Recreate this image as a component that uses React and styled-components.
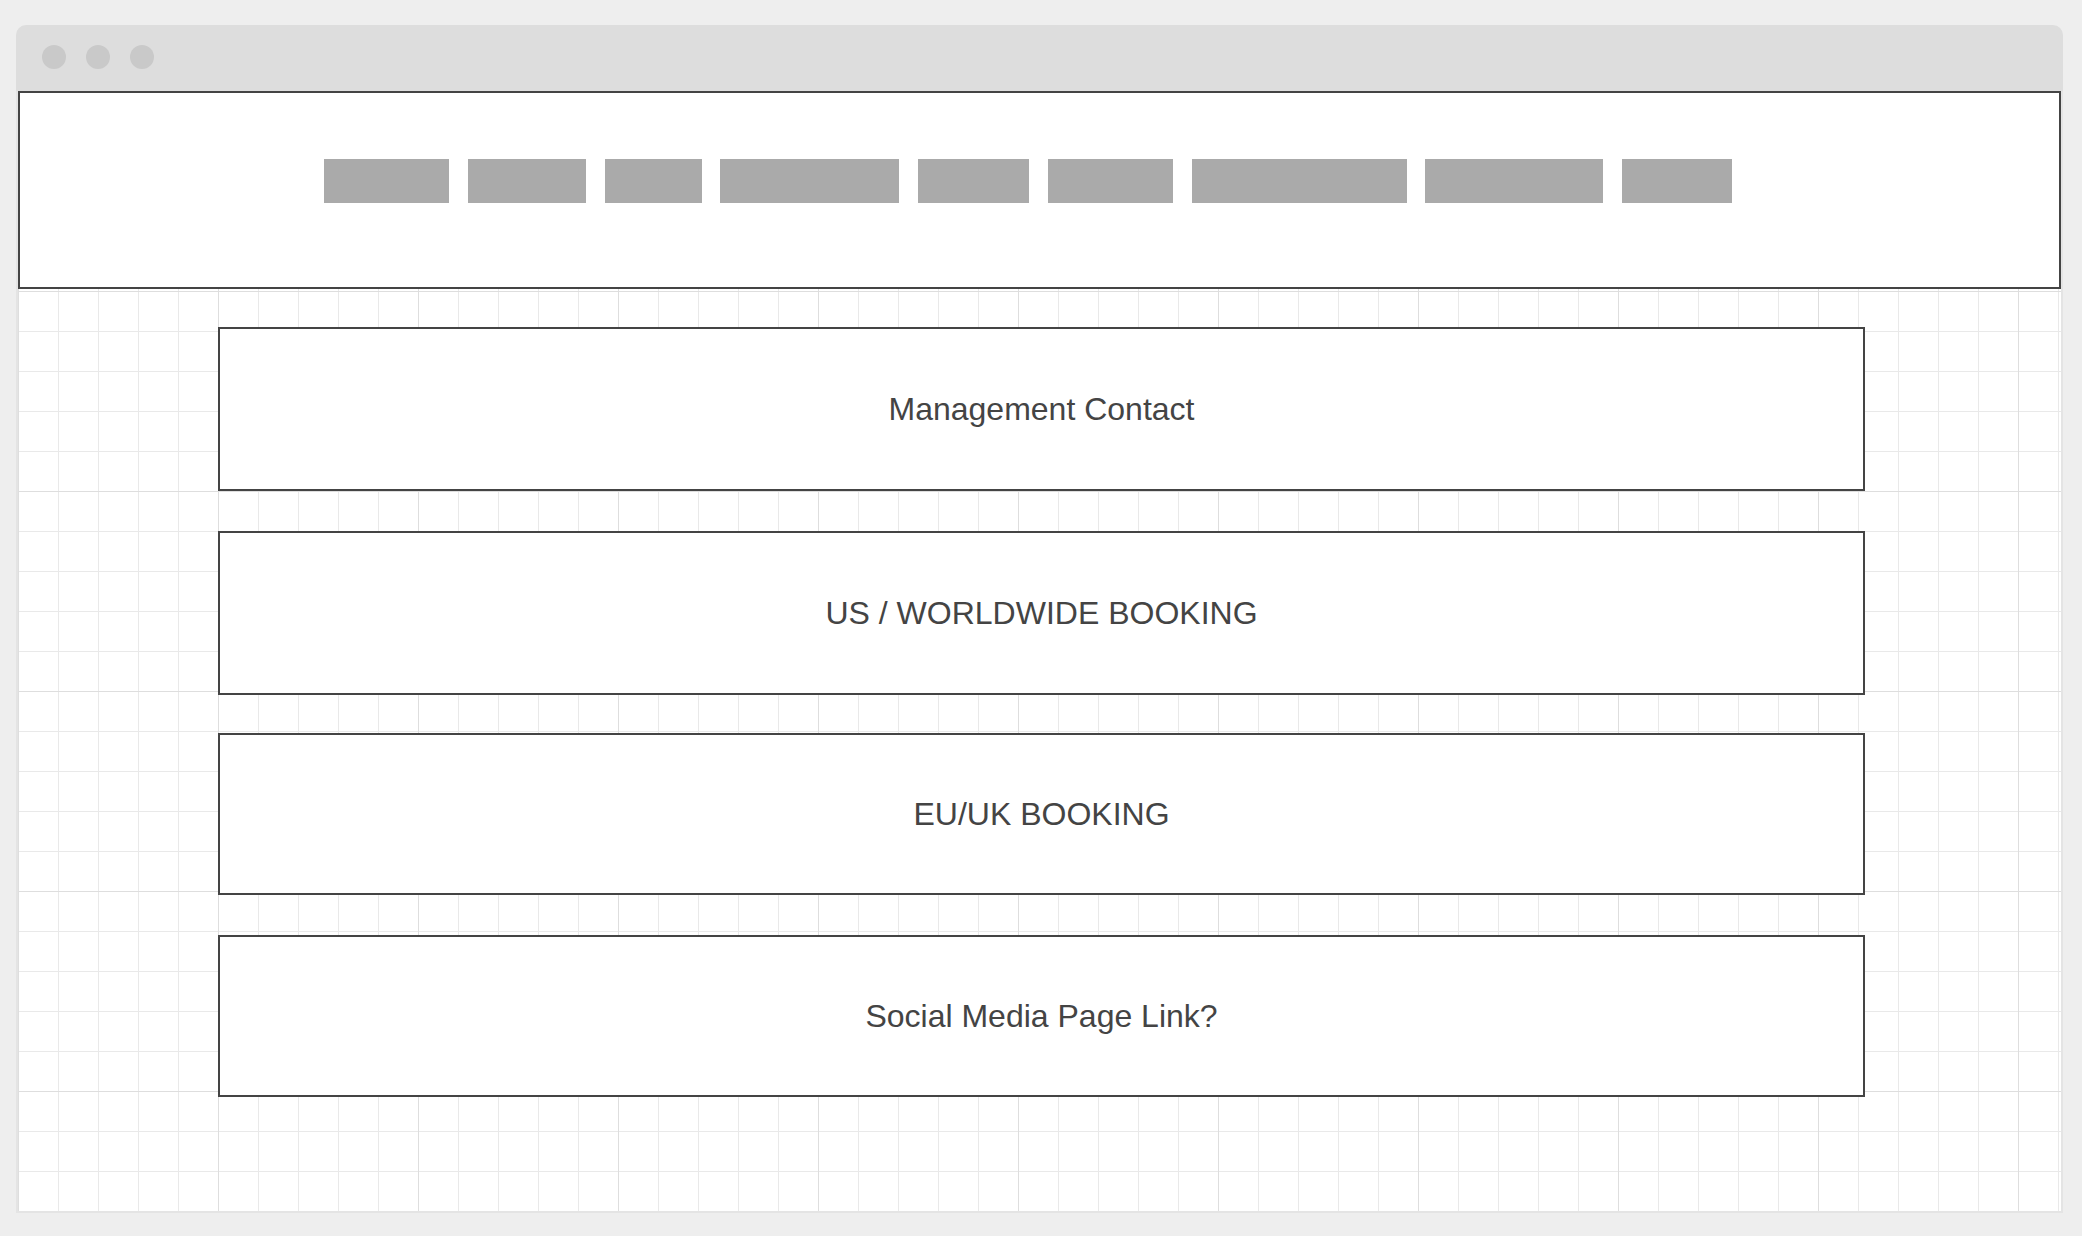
import React from 'react'
import styled, { createGlobalStyle } from 'styled-components'

const GlobalStyle = createGlobalStyle`
    html, body {
        margin: 0;
        padding: 0;
        background: #eeeeee;
        font-family: "Liberation Sans", Arial, sans-serif;
    }
    * {
        box-sizing: border-box;
    }
`

const Frame = styled.div`
    width: 2047px;
    margin: 25px 0 0 16px;
    border-radius: 10px 10px 0 0;
    overflow: hidden;
`

const TitleBar = styled.div`
    height: 66px;
    background: #dddddd;
    display: flex;
    align-items: center;
    gap: 20px;
    padding: 0 0 2px 26px;
`

const Dot = styled.span`
    width: 24px;
    height: 24px;
    border-radius: 50%;
    background: #c9c9c9;
`

const Body = styled.div`
    border: 2px solid #e4e4e4;
    border-top: none;
    background: #fff;
`

const Header = styled.header`
    height: 198px;
    border: 2px solid #444;
    background: #fff;
    padding: 66px 23px 0 0;
    display: flex;
    justify-content: center;
    align-items: flex-start;
    gap: 18.75px;
`

const NavItem = styled.div`
    width: ${props => props.w}px;
    height: 44px;
    background: #aaaaaa;
`

const Main = styled.main`
    height: 922px;
    padding: 38px 0 0 200px;
    display: flex;
    flex-direction: column;
    background-color: #fff;
    background-image:
        linear-gradient(to right, #dedede 1px, transparent 1px),
        linear-gradient(to bottom, #dedede 1px, transparent 1px),
        linear-gradient(to right, #e9e9e9 1px, transparent 1px),
        linear-gradient(to bottom, #e9e9e9 1px, transparent 1px);
    background-size: 200px 200px, 200px 200px, 40px 40px, 40px 40px;
    background-position: 0 2px, 0 2px, 0 2px, 0 2px;
`

const Card = styled.section`
    width: 1647px;
    height: ${props => props.h}px;
    margin-bottom: ${props => props.space}px;
    border: 2px solid #444;
    background: #fff;
    display: flex;
    align-items: center;
    justify-content: center;
    color: #444;
    font-size: 32px;
`

const navWidths = [125, 118, 97, 179, 111, 125, 215, 178, 110]

const cards = [
    { label: 'Management Contact', h: 164, space: 40 },
    { label: 'US / WORLDWIDE BOOKING', h: 164, space: 38 },
    { label: 'EU/UK BOOKING', h: 162, space: 40 },
    { label: 'Social Media Page Link?', h: 162, space: 0 },
]

const App = () => {
    return (
        <>
            <GlobalStyle />
            <Frame>
                <TitleBar>
                    <Dot />
                    <Dot />
                    <Dot />
                </TitleBar>
                <Body>
                    <Header>
                        {navWidths.map((w, index) => (
                            <NavItem key={index} w={w} />
                        ))}
                    </Header>
                    <Main>
                        {cards.map((card) => (
                            <Card key={card.label} h={card.h} space={card.space}>
                                {card.label}
                            </Card>
                        ))}
                    </Main>
                </Body>
            </Frame>
        </>
    )
}

export default App
